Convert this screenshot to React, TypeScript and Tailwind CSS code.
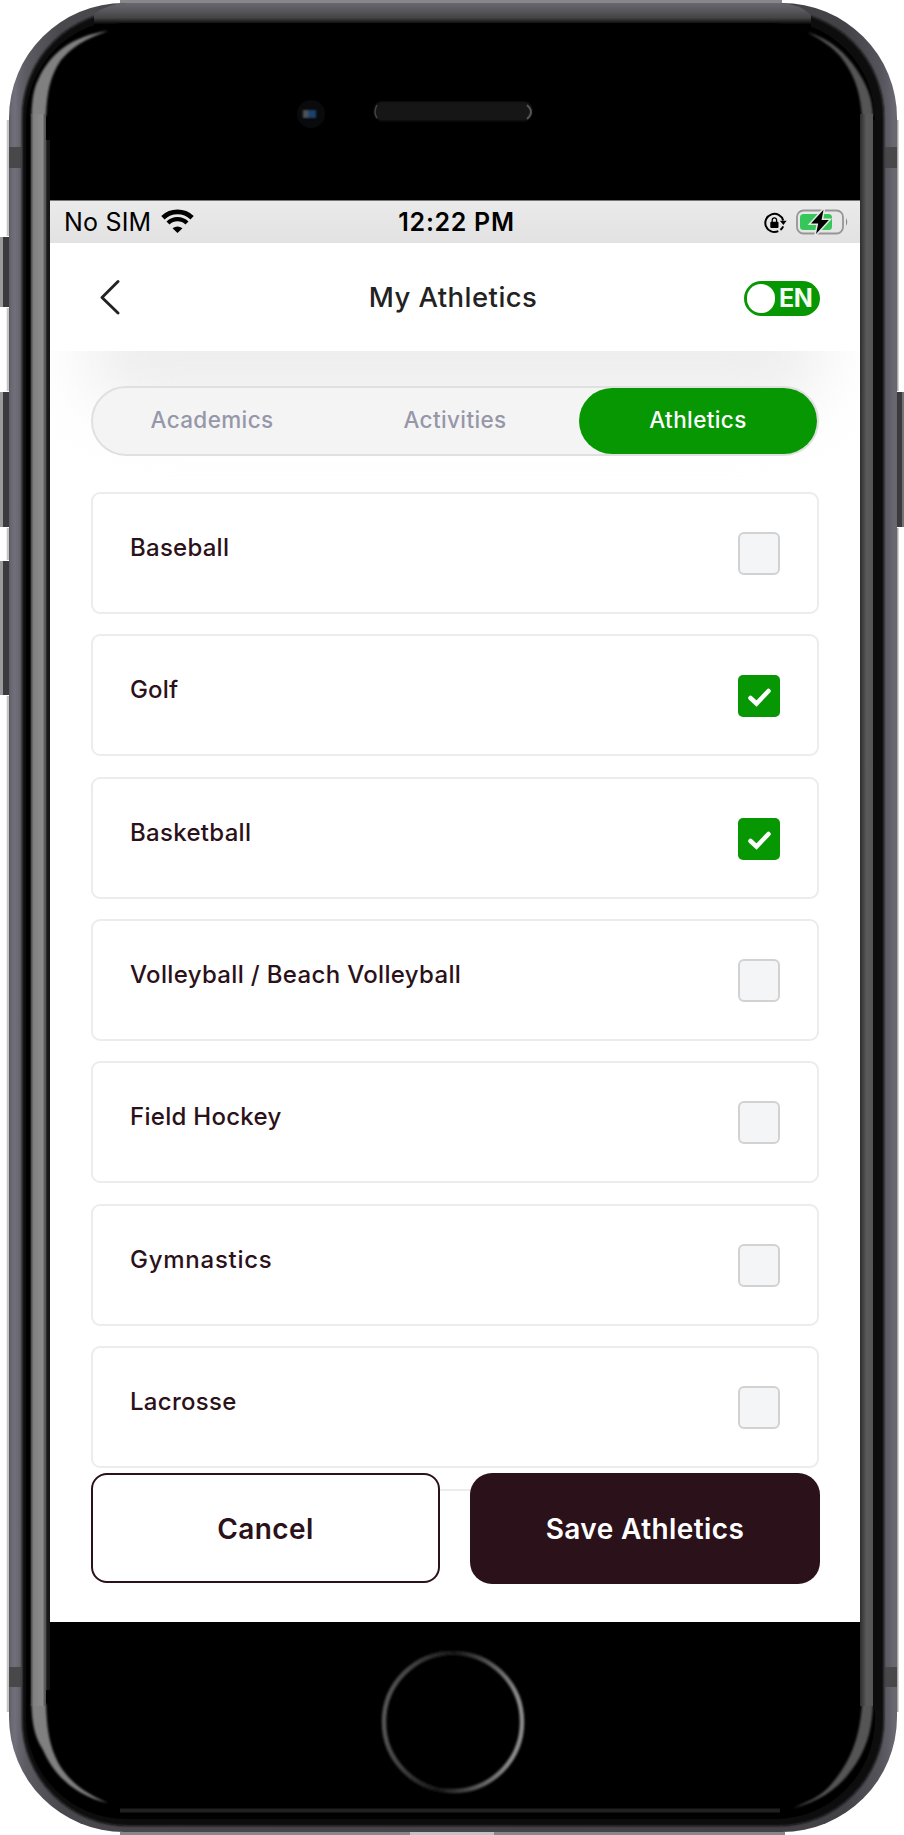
import React from "react";

const sports = [
  { name: "Baseball", checked: false, tracking: "tracking-[0.25px]" },
  { name: "Golf", checked: true, tracking: "tracking-[0.15px]" },
  { name: "Basketball", checked: true, tracking: "tracking-[0.3px]" },
  { name: "Volleyball / Beach Volleyball", checked: false, tracking: "tracking-[0.34px]" },
  { name: "Field Hockey", checked: false, tracking: "tracking-[0.28px]" },
  { name: "Gymnastics", checked: false, tracking: "tracking-[0.75px]" },
  { name: "Lacrosse", checked: false, tracking: "tracking-[0.3px]" },
];

function PhoneFrame() {
  return (
    <svg className="absolute inset-0" width="904" height="1835" viewBox="0 0 904 1835" aria-hidden="true">
      <defs>
        <linearGradient id="side" gradientUnits="userSpaceOnUse" x1="8" x2="898" y1="0" y2="0">
          <stop offset="0" stopColor="#56555b" />
          <stop offset="0.004" stopColor="#6b6a73" />
          <stop offset="0.008" stopColor="#716f7a" />
          <stop offset="0.013" stopColor="#65646c" />
          <stop offset="0.02" stopColor="#5c5b62" />
          <stop offset="0.06" stopColor="#49484d" />
          <stop offset="0.94" stopColor="#434247" />
          <stop offset="0.98" stopColor="#55545b" />
          <stop offset="0.988" stopColor="#5d5c64" />
          <stop offset="0.996" stopColor="#6a6972" />
          <stop offset="1" stopColor="#65646a" />
        </linearGradient>
        <linearGradient id="topEdge" x1="0" x2="0" y1="0" y2="1">
          <stop offset="0" stopColor="#68676f" />
          <stop offset="0.3" stopColor="#56565b" />
          <stop offset="0.55" stopColor="#444" />
          <stop offset="0.8" stopColor="#000" />
        </linearGradient>
        <linearGradient id="leftShine" gradientUnits="userSpaceOnUse" x1="30" x2="50" y1="0" y2="0">
          <stop offset="0" stopColor="#303030" />
          <stop offset="0.18" stopColor="#808080" />
          <stop offset="0.65" stopColor="#8c8c8c" />
          <stop offset="0.7" stopColor="#606060" />
          <stop offset="0.8" stopColor="#505050" />
          <stop offset="0.84" stopColor="#191919" />
          <stop offset="1" stopColor="#161616" />
        </linearGradient>
        <linearGradient id="rightShine" gradientUnits="userSpaceOnUse" x1="860" x2="873" y1="0" y2="0">
          <stop offset="0" stopColor="#2d2d2d" />
          <stop offset="0.3" stopColor="#484848" />
          <stop offset="0.5" stopColor="#5a5a5a" />
          <stop offset="1" stopColor="#555" />
        </linearGradient>
        <linearGradient id="homeRing" x1="0" x2="1" y1="0" y2="0.12">
          <stop offset="0" stopColor="#5c5c5c" />
          <stop offset="0.2" stopColor="#444" />
          <stop offset="0.5" stopColor="#161616" />
          <stop offset="0.8" stopColor="#5f5f5f" />
          <stop offset="1" stopColor="#8c8c8c" />
        </linearGradient>
        <filter id="soft"><feGaussianBlur stdDeviation="0.9" /></filter>
      </defs>
      <path d="M120 1.500H782M120 1833.500H785" stroke="#88878b" strokeWidth="3" />
      <path d="M410 1833.500H494" stroke="#c2c2c3" strokeWidth="3" />
      <g fill="#3b3a3f">
        <rect x="3" y="237" width="8" height="70" />
        <rect x="3" y="392" width="8" height="135" />
        <rect x="3" y="561" width="8" height="134" />
        <rect x="896" y="392" width="8" height="135" />
      </g>
      <g fill="#9b9b9c">
        <rect x="0" y="237" width="3" height="70" />
        <rect x="0" y="392" width="3" height="135" />
        <rect x="0" y="561" width="3" height="134" />
      </g>
      <rect x="902" y="392" width="2" height="135" fill="#747477" />
      <path d="M8 120V236M8 308V391M8 528V560M8 696V1712" stroke="#c4c4c5" strokeWidth="2.500" />
      <path d="M897.500 120V391M897.500 528V1712" stroke="#a8a8aa" strokeWidth="2" />
      <rect x="9" y="3" width="888" height="1829" rx="115" fill="url(#side)" />
      <path d="M9 147h12v21H9zM885 147h12v21h-12zM9 1667h12v20H9zM885 1667h12v20h-12z" fill="#48484a" />
      <rect x="22" y="11" width="862" height="1815" rx="106" fill="#090909" filter="url(#soft)" />
      <rect x="26" y="20" width="849" height="1799" rx="100" fill="#000" />
      <path d="M94 28V14Q108 4 126 3H780Q800 4 811 15V30Q790 23 770 23H132Q110 23 94 28Z" fill="url(#topEdge)" />
      <g fill="#808080" filter="url(#soft)">
        <path d="M31.500 116C32 98 34 88 38 80C50 53 72 36 108 31C84 39 71 48 61 60C50 76 47 92 46 116Z" />
        <path d="M31.500 1704C32 1722 34 1736 43 1750C56 1779 78 1796 108 1803C86 1794 73 1784 62 1769C50 1750 47 1732 46 1704Z" />
      </g>
      <g fill="#545454" filter="url(#soft)">
        <path d="M873 116C872 96 866 84 857 70C846 53 830 39 807 32C822 40 832 47 840 56C855 75 860 92 862 116Z" />
        <path d="M873 1704C872 1728 868 1742 860 1757C846 1782 826 1800 793 1808C810 1801 820 1796 828 1788C850 1764 860 1738 862 1704Z" />
      </g>
      <rect x="30.500" y="114" width="15.500" height="1592" fill="url(#leftShine)" />
      <rect x="46" y="140" width="4" height="1550" fill="url(#leftShine)" />
      <rect x="860" y="114" width="13" height="1592" fill="url(#rightShine)" />
      <rect x="873" y="120" width="9" height="1590" fill="#0c0c0c" />
      <path d="M120 1810.500H780" stroke="#212121" strokeWidth="4" />
      <circle cx="311" cy="114" r="14" fill="#090a0b" />
      <g filter="url(#soft)">
        <rect x="303" y="110" width="6" height="8" fill="#4d535a" />
        <rect x="308" y="110" width="8" height="8" fill="#1d426c" />
      </g>
      <rect x="374" y="101.500" width="158" height="19.500" rx="8" fill="#191919" filter="url(#soft)" />
      <path d="M377 105Q373 112 377 118" stroke="#444" strokeWidth="1.500" fill="none" />
      <path d="M527 105Q535 112 527 119" stroke="#555" strokeWidth="2" fill="none" />
      <circle cx="453" cy="1722" r="69" fill="none" stroke="url(#homeRing)" strokeWidth="4.500" filter="url(#soft)" />
    </svg>
  );
}

function StatusBar() {
  return (
    <div className="relative z-10 flex h-[43px] shrink-0 items-center border-t border-[#777] bg-gradient-to-b from-[#eaeaea] to-[#e2e2e2] pr-[11px] pl-[14px] font-['Inter',sans-serif] text-black">
      <div className="flex flex-1 items-center">
        <span className="pt-px text-[25px] leading-[41px] tracking-[0.2px]">No SIM</span>
        <svg className="-mt-[2px] ml-[10px]" width="33" height="24" viewBox="0 0 33 24">
          <path d="M1.900 8.700A21.300 21.300 0 0 1 31.100 8.700" stroke="#000" strokeWidth="4.800" fill="none" />
          <path d="M7 14A13.500 13.500 0 0 1 26 14" stroke="#000" strokeWidth="4.300" fill="none" />
          <path d="M11.500 19.200Q16.500 15.600 21.500 19.200L16.500 24Z" fill="#000" />
        </svg>
      </div>
      <span className="pt-px text-[25px] font-semibold tracking-[0.7px]">12:22 PM</span>
      <div className="-mt-px flex flex-1 items-center justify-end">
        <svg className="mt-[2px]" width="23" height="22" viewBox="0 0 23 22">
          <path d="M19.200 8.500A9.100 9.100 0 1 0 14.300 19.200" stroke="#000" strokeWidth="2" fill="none" />
          <path d="M16.400 17.900Q18.200 16.600 19.200 14.300" stroke="#000" strokeWidth="2" fill="none" />
          <path d="M15.800 8.800H22.600L19.400 13Z" fill="#000" />
          <rect x="6.300" y="9.700" width="8.200" height="6.300" rx="1" fill="#000" />
          <path d="M8.200 10.500V8.200A2.200 2.300 0 0 1 12.600 8.200V10.500" stroke="#000" strokeWidth="1.300" fill="none" />
        </svg>
        <svg className="ml-[9px]" width="53" height="28" viewBox="0 0 53 28">
          <rect x="1" y="2.500" width="46" height="23" rx="6.500" stroke="#969696" strokeWidth="1.800" fill="none" />
          <rect x="4" y="6" width="32" height="16" rx="3.500" fill="#35c759" />
          <path d="M50 10Q52.500 14 50 18Z" fill="#8c8c8c" />
          <path d="M27.500 1.800L15 15.500H22.200L20 26L32.800 11.900H25.600Z" fill="#000" stroke="#e7e7e7" strokeWidth="3" paintOrder="stroke" />
        </svg>
      </div>
    </div>
  );
}

function Header() {
  return (
    <header className="relative z-10 flex h-[108px] shrink-0 items-center bg-white pr-[54px] pl-[50px]">
      <div className="flex-1">
        <svg width="22" height="36" viewBox="0 0 22 36">
          <path d="M18 2.500L2 18.500L18 34" stroke="#222" strokeWidth="2.900" fill="none" strokeLinecap="round" strokeLinejoin="round" />
        </svg>
      </div>
      <h1 className="pt-[2px] text-[27.5px] font-medium tracking-[0.45px] text-[#222]">My Athletics</h1>
      <div className="flex flex-1 justify-end">
        <button className="mt-[3px] -mr-[14px] flex h-[35px] w-[76px] shrink-0 items-center rounded-full bg-[#069703] pl-[3px]">
          <span className="h-[29px] w-[28px] rounded-full bg-white" />
          <span className="ml-[4px] text-[25px] leading-[35px] font-bold tracking-[-0.5px] text-[#f2fff2]">EN</span>
        </button>
      </div>
    </header>
  );
}

function Checkbox({ checked }: { checked: boolean }) {
  if (!checked) {
    return <span className="h-[43px] w-[42px] shrink-0 rounded-[6px] border-2 border-[#d2d2d2] bg-[#f4f5f7]" />;
  }
  return (
    <span className="mt-px flex h-[42px] w-[42px] shrink-0 items-center justify-center rounded-[5px] bg-[#069703]">
      <svg width="42" height="42" viewBox="0 0 42 42">
        <path d="M12.500 23L18.500 28.500L30.500 16" stroke="#fff" strokeWidth="4.500" fill="none" strokeLinecap="round" />
      </svg>
    </span>
  );
}

export default function App() {
  return (
    <div className="relative h-[1835px] w-[904px] overflow-hidden bg-white font-['Inter',sans-serif]">
      <PhoneFrame />
      <div className="relative pt-[200px] pl-[50px]">
        <main className="flex h-[1422px] w-[810px] flex-col overflow-hidden bg-white">
          <StatusBar />
          <Header />
          <div className="relative flex min-h-0 flex-1 flex-col px-[41px] pt-[35px]">
            <div className="absolute -top-[120px] left-[38px] h-[178px] w-[734px] rounded-[40px] bg-[#eeeeee] blur-[32px]" />
            <nav className="relative flex h-[70px] shrink-0 rounded-full border-2 border-[#e0e0e0] bg-[#f4f4f4] text-[22.5px] font-medium tracking-[0.38px] text-[#9697a8]">
              <span className="flex w-[238px] items-center justify-center pb-[2px]">Academics</span>
              <span className="flex w-[248px] items-center justify-center pb-[2px]">Activities</span>
              <span className="flex flex-1 items-center justify-center rounded-full bg-[#069703] pb-[2px] text-white">Athletics</span>
            </nav>
            <ul className="relative mt-[35.700px] flex flex-col gap-[20.420px]">
              {sports.map((s) => (
                <li key={s.name} className="flex h-[122px] shrink-0 items-start justify-between rounded-[9px] border-2 border-[#ececec] bg-white pt-[38px] pr-[37px] pl-[37px]">
                  <span className={`text-[24px] leading-[32px] font-medium text-[#2b1119] ${s.tracking}`}>{s.name}</span>
                  <Checkbox checked={s.checked} />
                </li>
              ))}
              <li className="h-[60px] shrink-0 rounded-t-[9px] border-t-2 border-[#ececec] bg-white" />
            </ul>
            <footer className="absolute inset-x-0 top-[1122px] flex h-[149px] justify-between pr-[40px] pl-[41px] text-[28px] font-semibold tracking-[0.4px]">
              <button className="h-[110px] w-[349px] rounded-[16px] border-2 border-[#2b1119] bg-white pt-px text-[#2b1119]">Cancel</button>
              <button className="h-[111px] w-[350px] rounded-[22px] bg-[#2b1119] text-white">Save Athletics</button>
            </footer>
          </div>
        </main>
      </div>
    </div>
  );
}
